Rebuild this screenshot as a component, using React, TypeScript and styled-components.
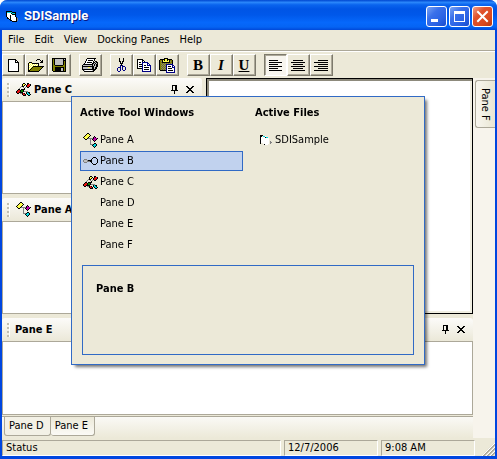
import React from "react";
import styled, { createGlobalStyle, css } from "styled-components";

const GlobalStyle = createGlobalStyle`
  *, *::before, *::after { box-sizing: border-box; }
  html, body { margin: 0; background: #fff; }
  body, button {
    font-family: "DejaVu Sans Condensed", "Noto Sans", sans-serif;
    font-size: 11px;
    line-height: 14px;
    color: #000;
  }
  button { margin: 0; padding: 0; border: 0; background: none; }
  h1, h2, p, ul { margin: 0; padding: 0; font-size: inherit; }
`;

/* ---------- pixel icons ---------- */

const palette: Record<string, string> = {
  k: "#000000",
  w: "#ffffff",
  y: "#ffff4a",
  o: "#808000",
  g: "#808080",
  l: "#c0c0c0",
  n: "#000084",
  c: "#00d8e0",
  r: "#e01010",
  m: "#c000a8",
  e: "#008000",
};

function PixelIcon({ rows }: { rows: string[] }) {
  const width = Math.max(...rows.map((row) => row.length));
  return (
    <svg
      width={width}
      height={rows.length}
      viewBox={`0 0 ${width} ${rows.length}`}
      shapeRendering="crispEdges"
      aria-hidden="true"
    >
      {rows.flatMap((row, y) =>
        Array.from(row.matchAll(/([a-z])\1*/g), (run) => (
          <rect
            key={`${run.index}-${y}`}
            x={run.index}
            y={y}
            width={run[0].length}
            height={1}
            fill={palette[run[1]]}
          />
        )),
      )}
    </svg>
  );
}

const icons: Record<string, string[]> = {
  app: [
    "kkkkkk......",
    "kccccckkkk..",
    "kwwwwkccck..",
    "kwwwwwkkkk..",
    "kwwwkwwwwk..",
    "kwwwkwwwwk..",
    ".kwwkwwwwwk.",
    ".kkwkwwwwwkg",
    "...kkwwwwwkg",
    "....kkwwwwkg",
    "......kkkkk.",
  ],
  file: [
    "kkk.........",
    "kk.ccw......",
    "kwwwwkcc....",
    "kwwwwwwww...",
    "kwwwwwwww...",
    "kwwwwwwww...",
    "kwwwwwwww.g.",
    "kwwwwwwww.gg",
    "k..wwwwww.g.",
    "....kwww....",
  ],
  new: [
    "kkkkkkkk...",
    "kwwwwwwkk..",
    "kwwwwwwkwk.",
    "kwwwwwwkkkk",
    "kwwwwwwwwwk",
    "kwwwwwwwwwk",
    "kwwwwwwwwwk",
    "kwwwwwwwwwk",
    "kwwwwwwwwwk",
    "kwwwwwwwwwk",
    "kwwwwwwwwwk",
    "kwwwwwwwwwk",
    "kkkkkkkkkkk",
  ],
  open: [
    ".........kkk....",
    "........k...k.k.",
    ".............kk.",
    ".kkk........kkk.",
    "kywykkkkkkk.....",
    "kwywywywywk.....",
    "kywywywywyk.....",
    "kwywykkkkkkkkkkk",
    "kywykoooooooook.",
    "kwykoooooooook..",
    "kykoooooooook...",
    "kkoooooooook....",
    "kkkkkkkkkkk.....",
  ],
  save: [
    "kkkkkkkkkkkkkk",
    "kokllllllllklk",
    "kokllllllllkkk",
    "kokllllllllkok",
    "kokllllllllkok",
    "kokllllllllkok",
    "kokllllllllkok",
    "kookkkkkkkkook",
    "kooooooooooook",
    "kookkkkkkkkkok",
    "kookkkkkkllkok",
    "kookkkkkkllkok",
    "kookkkkkkllkok",
    ".kkkkkkkkkkkkk",
  ],
  print: [
    ".....kkkkkkkkk..",
    "....kwwwwwwwk...",
    "....kwkkkkkwk...",
    "...kwwwwwwwk.kk.",
    "...kwkkkkkwkklkk",
    "..kwwwwwwwkklklk",
    ".kkkkkkkkkklklkk",
    "klllllllllklklkk",
    "kkkkkkkkkkkkllkk",
    "klllllyyllkklkk.",
    "klllllllllkklkk.",
    "kkkkkkkkkkkkkk..",
    ".klwwwwwwwlkk...",
    "..kkkkkkkkkk....",
  ],
  cut: [
    "..k...k..",
    "..k...k..",
    "..k...k..",
    "..kk.kk..",
    "...k.k...",
    "...kkk...",
    "....k....",
    "...nkn...",
    "...n.nnn.",
    ".nnn.n..n",
    "n..n.n..n",
    "n..n.n..n",
    "n..n..nn.",
    ".nn......",
  ],
  copy: [
    "kkkkkk.........",
    "kwwwwkk........",
    "kwwwwkwk.......",
    "kwkkwnnnnnn....",
    "kwwwwnwwwwnn...",
    "kwkkknwwwwnwn..",
    "kwwwwnwkkwnnnn.",
    "kwkkknwwwwwwwn.",
    "kwwwwnwkkkkkwn.",
    "kkkkknwwwwwwwn.",
    ".....nwkkkkkwn.",
    ".....nwwwwwwwn.",
    ".....nnnnnnnnn.",
  ],
  paste: [
    ".....kkkk.......",
    ".kkkkkyykkkkk...",
    "kookykyykykook..",
    "kogkyyyyyykgok..",
    "kookkkkkkkkook..",
    "kogogogogogogk..",
    "koogogonnnnnnn..",
    "kogogognwwwwwnn.",
    "koogogonwkkkwnwn",
    "kogogognwwwwwnnn",
    "koogogonwkkkkwwn",
    "kogogognwwwwwwwn",
    ".kkkkkknwkkkkkwn",
    ".......nwwwwwwwn",
    ".......nnnnnnnnn",
  ],
  left: [
    "kkkkkkkkk....",
    ".............",
    "kkkkkkkkkkkkk",
    ".............",
    "kkkkkkkkk....",
    ".............",
    "kkkkkkkkkkkkk",
    ".............",
    "kkkkkkkkk....",
    ".............",
    "kkkkkkkkkkkkk",
  ],
  center: [
    "..kkkkkkkkkk..",
    "..............",
    "kkkkkkkkkkkkkk",
    "..............",
    "..kkkkkkkkkk..",
    "..............",
    "kkkkkkkkkkkkkk",
    "..............",
    "..kkkkkkkkkk..",
    "..............",
    "kkkkkkkkkkkkkk",
  ],
  right: [
    "....kkkkkkkkkk",
    "..............",
    "kkkkkkkkkkkkkk",
    "..............",
    "....kkkkkkkkkk",
    "..............",
    "kkkkkkkkkkkkkk",
    "..............",
    "....kkkkkkkkkk",
    "..............",
    "kkkkkkkkkkkkkk",
  ],
  paneA: [
    "....kk..........",
    "...kyyk.........",
    "..kyyyyk........",
    ".kyyyyk....k....",
    "kyyyyk....kmk...",
    ".kyykgggggkmmmk.",
    "..kk...g.kmmmk..",
    ".......g..kmk...",
    ".......g...k....",
    ".......g........",
    ".......g...kk...",
    ".......gggkcck..",
    ".........kccck..",
    "..........kck...",
    "...........k....",
  ],
  paneB: [
    "..........kkk..",
    ".........k...k.",
    ".ggg....k.....k",
    "glllgkkkk.....k",
    "glllgggkk.....k",
    ".ggg....k.....k",
    ".........k...k.",
    "..........kkk..",
  ],
  paneC: [
    ".......kk..kk...",
    "......kyyk.krrk.",
    "......kyk.krrrk.",
    ".....gkk..krrk..",
    "....g..g.g.kk...",
    "...g....k.......",
    "..kk.kkkk.......",
    ".krrkeek........",
    "krrrkeekgggg....",
    "krrkkkk...kckk..",
    ".kk.ggkrk.kcck..",
    "......krrk.kcck.",
    ".......kkk..kk..",
  ],
  pin: [
    ".kkkkk.",
    ".k..kk.",
    ".k..kk.",
    ".k..kk.",
    ".k..kk.",
    "kkkkkkk",
    "...k...",
    "...k...",
    "...k...",
  ],
  close: [
    "kk....kk",
    ".kk..kk.",
    "..kkkk..",
    "...kk...",
    "..kkkk..",
    ".kk..kk.",
    "kk....kk",
  ],
};

/* ---------- window frame ---------- */

const Window = styled.main`
  display: flex;
  flex-direction: column;
  min-height: 100vh;
  background: #ece9d8;
  border: solid #0046e0;
  border-width: 0 2px 3px;
  border-radius: 8px 8px 0 0;
`;

const TitleBar = styled.header`
  display: flex;
  align-items: center;
  gap: 2px;
  height: 30px;
  margin: 0 -2px;
  padding: 2px 4px 0 6px;
  border-radius: 7px 7px 0 0;
  background: linear-gradient(
    #0046d0 0%, #2a86fa 8%, #0a64ee 16%, #0055e5 30%, #0058ea 50%, #0668fb 75%, #0564f4 90%, #0048d8 100%
  );
`;

const WindowTitle = styled.h1`
  flex: 1;
  padding-left: 4px;
  color: #fff;
  font: bold 13px/18px Roboto, sans-serif;
  text-shadow: 1px 1px 0 #0a1883;
`;

const CaptionButton = styled.button<{ $danger?: boolean }>`
  display: grid;
  place-items: center;
  width: 21px;
  height: 21px;
  border: 1px solid #fff;
  border-radius: 3px;
  background: ${(p) =>
    p.$danger
      ? "linear-gradient(135deg, #f0a088, #e0512c 35%, #dc4a20 70%, #b83a12)"
      : "linear-gradient(135deg, #7aa4f4, #3a70ea 35%, #2a62e4 70%, #1a4ccc)"};
`;

const MenuBar = styled.nav`
  display: flex;
  align-items: center;
  height: 20px;
  padding: 0 5px 0 6px;
  gap: 10px;
`;

const Toolbar = styled.div`
  display: flex;
  gap: 8px;
  padding: 3px 0 2px;
  border-top: 1px solid #aca899;
  box-shadow: inset 0 1px 0 #fff;
`;

const ToolGroup = styled.div`
  display: flex;
`;

const ToolButton = styled.button<{ $pressed?: boolean; $glyph?: "b" | "i" | "u" }>`
  display: grid;
  place-items: center;
  width: 23px;
  height: 22px;
  padding-right: 1px;
  border: 1px solid;
  border-color: #fff #7d7a6c #7d7a6c #fff;
  box-shadow: inset -1px -1px 0 #aca899;
  ${(p) =>
    p.$pressed &&
    css`
      border-color: #7d7a6c #fff #fff #7d7a6c;
      box-shadow: inset 1px 1px 0 #aca899;
      background: #f7f5ee;
    `}
  ${(p) =>
    p.$glyph &&
    css`
      font: bold 15px/16px "Liberation Serif", serif;
      font-style: ${p.$glyph === "i" ? "italic" : "normal"};
      text-decoration: ${p.$glyph === "u" ? "underline" : "none"};
    `}
`;

/* ---------- docking area ---------- */

const DockSite = styled.div`
  display: flex;
  flex: 1;
`;

const DockMain = styled.div`
  display: flex;
  flex: 1;
  flex-direction: column;
  gap: 4px;
`;

const DockUpper = styled.div`
  display: flex;
  flex: 1;
  gap: 4px;
`;

const LeftDock = styled.div`
  display: flex;
  flex-direction: column;
  gap: 4px;
  width: 43%;
  max-width: 200px;
`;

const Pane = styled.section`
  display: flex;
  flex: 1;
  flex-direction: column;
`;

const BottomDock = styled.div`
  display: flex;
  flex-direction: column;
  height: 120px;
`;

const PaneHeader = styled.header`
  display: flex;
  align-items: center;
  gap: 6px;
  height: 23px;
  padding: 0 8px 0 5px;
  border-radius: 3px 3px 0 0;
  background: linear-gradient(#fcfbf9, #ebe8d8);
`;

const Grip = styled.span`
  width: 2px;
  height: 14px;
  background: repeating-linear-gradient(#c1beb1 0 2px, transparent 2px 4px);
  box-shadow: 1px 0 0 #fff;
`;

const PaneCaption = styled.h2`
  display: flex;
  flex: 1;
  align-items: center;
  gap: 2px;
  font-weight: bold;
`;

const IconSlot = styled.span`
  display: grid;
  place-items: center;
  width: 17px;
  height: 16px;
`;

const FlatButton = styled.button`
  display: grid;
  place-items: center;
  padding-left: 2px;
`;

const PaneBody = styled.div`
  flex: 1;
  border: 1px solid #aca899;
  background: #fff;
`;

const Client = styled.div`
  flex: 1;
  border: 1px solid #000;
  background: #fff;
  box-shadow: inset 2px 2px 0 #8d8a7c, inset -2px -2px 0 #f1efe2;
`;

const SideStrip = styled.aside`
  width: 22px;
  padding: 2px 0 0 2px;
  background: #f7f4ec;
`;

const SideTab = styled.button`
  display: block;
  width: 20px;
  height: 48px;
  padding-right: 2px;
  border: 1px solid #aca899;
  border-right: 0;
  border-radius: 3px 0 0 3px;
  background: linear-gradient(90deg, #f8f6ef, #e9e6d3);
  writing-mode: vertical-rl;
  text-align: center;
`;

const TabStrip = styled.div`
  display: flex;
  height: 22px;
  margin-top: 1px;
  padding-left: 2px;
  border-top: 1px solid #aca899;
  background: linear-gradient(#faf9f5, #ece9d8);
`;

const Tab = styled.button<{ $active?: boolean }>`
  height: 19px;
  padding: 0 6px 0 4px;
  border: 1px solid #aca899;
  border-width: 0 1px 1px 0;
  border-radius: 0 0 3px 3px;
  background: ${(p) => (p.$active ? "linear-gradient(#ece9d8, #fbfaf6)" : "#f3f1e6")};
  &:first-child { border-left-width: 1px; }
`;

const StatusBar = styled.footer`
  display: flex;
  gap: 3px;
  height: 18px;
  padding-top: 2px;
`;

const StatusCell = styled.div<{ $wide?: boolean }>`
  flex: ${(p) => (p.$wide ? "1" : "0 0 94px")};
  padding-left: 3px;
  border: 1px solid;
  border-color: #aca899 #fff #fff #aca899;
`;

const SizeGrip = styled.div`
  display: flex;
  align-items: flex-end;
  width: 17px;
`;

/* ---------- window switcher ---------- */

const Overlay = styled.div`
  position: fixed;
  inset: 2px 1px 0 0;
  display: grid;
  place-items: center;
`;

const Switcher = styled.section`
  display: flex;
  flex-direction: column;
  gap: 9px;
  width: 354px;
  max-width: 100%;
  padding: 9px 10px 9px 8px;
  border: 1px solid #316ac5;
  background: #ece9d8;
  box-shadow: 3px 3px 3px -1px rgba(0, 0, 0, 0.55);
`;

const Columns = styled.div`
  display: flex;
  gap: 12px;
`;

const Column = styled.div<{ $first?: boolean }>`
  flex: ${(p) => (p.$first ? "0 0 163px" : "1")};
`;

const ColumnTitle = styled.h2`
  margin-bottom: 10px;
`;

const List = styled.ul`
  list-style: none;
`;

const ListItem = styled.li`
  padding-bottom: 1px;
`;

const Entry = styled.button<{ $selected?: boolean }>`
  display: flex;
  align-items: center;
  gap: 1px;
  width: 100%;
  height: 20px;
  padding: 0 1px;
  border: 1px solid ${(p) => (p.$selected ? "#316ac5" : "transparent")};
  background: ${(p) => (p.$selected ? "#c1d2ee" : "none")};
`;

const Preview = styled.div`
  height: 90px;
  margin-left: 2px;
  padding: 16px 13px;
  border: 1px solid #316ac5;
  font-weight: bold;
`;

const toolGroups = [
  ["new", "open", "save"],
  ["print"],
  ["cut", "copy", "paste"],
  ["Bold", "Italic", "Underline"],
  ["left", "center", "right"],
];

const glyphs: Record<string, "b" | "i" | "u"> = { Bold: "b", Italic: "i", Underline: "u" };

const toolWindows = [
  { name: "Pane A", icon: "paneA" },
  { name: "Pane B", icon: "paneB" },
  { name: "Pane C", icon: "paneC" },
  { name: "Pane D" },
  { name: "Pane E" },
  { name: "Pane F" },
];

function PaneTitle({ name, icon }: { name: string; icon?: string }) {
  return (
    <PaneHeader>
      <Grip />
      <PaneCaption>
        {icon && (
          <IconSlot>
            <PixelIcon rows={icons[icon]} />
          </IconSlot>
        )}
        {name}
      </PaneCaption>
      <FlatButton aria-label={`Auto hide ${name}`}>
        <PixelIcon rows={icons.pin} />
      </FlatButton>
      <FlatButton aria-label={`Close ${name}`}>
        <PixelIcon rows={icons.close} />
      </FlatButton>
    </PaneHeader>
  );
}

export default function App() {
  return (
    <>
      <GlobalStyle />
      <Window>
        <TitleBar>
          <PixelIcon rows={icons.app} />
          <WindowTitle>SDISample</WindowTitle>
          <CaptionButton aria-label="Minimize">
            <svg width="15" height="15" aria-hidden="true">
              <path d="M2 10h7v3H2z" fill="#fff" />
            </svg>
          </CaptionButton>
          <CaptionButton aria-label="Maximize">
            <svg width="13" height="13" aria-hidden="true">
              <path d="M1 1h11v11H1zM2 4v7h9V4z" fill="#fff" fillRule="evenodd" />
            </svg>
          </CaptionButton>
          <CaptionButton $danger aria-label="Close">
            <svg width="13" height="13" aria-hidden="true">
              <path d="M2 2l9 9M11 2l-9 9" stroke="#fff" strokeWidth="2" strokeLinecap="square" />
            </svg>
          </CaptionButton>
        </TitleBar>
        <MenuBar aria-label="Main menu">
          {["File", "Edit", "View", "Docking Panes", "Help"].map((item) => (
            <button key={item}>{item}</button>
          ))}
        </MenuBar>
        <Toolbar role="toolbar" aria-label="Standard">
          {toolGroups.map((group) => (
            <ToolGroup key={group[0]}>
              {group.map((tool) => (
                <ToolButton
                  key={tool}
                  aria-label={tool}
                  aria-pressed={tool === "left"}
                  $pressed={tool === "left"}
                  $glyph={glyphs[tool]}
                >
                  {glyphs[tool] ? tool[0] : <PixelIcon rows={icons[tool]} />}
                </ToolButton>
              ))}
            </ToolGroup>
          ))}
        </Toolbar>
        <DockSite>
          <DockMain>
            <DockUpper>
              <LeftDock>
                <Pane>
                  <PaneTitle name="Pane C" icon="paneC" />
                  <PaneBody />
                </Pane>
                <Pane>
                  <PaneTitle name="Pane A" icon="paneA" />
                  <PaneBody />
                </Pane>
              </LeftDock>
              <Client />
            </DockUpper>
            <BottomDock>
              <PaneTitle name="Pane E" />
              <PaneBody />
              <TabStrip role="tablist">
                <Tab role="tab">Pane D</Tab>
                <Tab role="tab" aria-selected $active>Pane E</Tab>
              </TabStrip>
            </BottomDock>
          </DockMain>
          <SideStrip>
            <SideTab>Pane F</SideTab>
          </SideStrip>
        </DockSite>
        <StatusBar>
          <StatusCell $wide>Status</StatusCell>
          <StatusCell>12/7/2006</StatusCell>
          <StatusCell>9:08 AM</StatusCell>
          <SizeGrip>
            <svg width="17" height="14" aria-hidden="true">
              <path d="M5 14L17 2M9 14L17 6M13 14L17 10" stroke="#aca899" strokeWidth="2" />
              <path d="M4 14L17 1M8 14L17 5M12 14L17 9" stroke="#fff" />
            </svg>
          </SizeGrip>
        </StatusBar>
      </Window>
      <Overlay>
        <Switcher aria-label="Window switcher">
          <Columns>
            <Column $first>
              <ColumnTitle>Active Tool Windows</ColumnTitle>
              <List>
                {toolWindows.map(({ name, icon }) => (
                  <ListItem key={name}>
                    <Entry $selected={name === "Pane B"}>
                      <IconSlot>{icon && <PixelIcon rows={icons[icon]} />}</IconSlot>
                      {name}
                    </Entry>
                  </ListItem>
                ))}
              </List>
            </Column>
            <Column>
              <ColumnTitle>Active Files</ColumnTitle>
              <List>
                <ListItem>
                  <Entry>
                    <IconSlot>
                      <PixelIcon rows={icons.file} />
                    </IconSlot>
                    SDISample
                  </Entry>
                </ListItem>
              </List>
            </Column>
          </Columns>
          <Preview>Pane B</Preview>
        </Switcher>
      </Overlay>
    </>
  );
}
